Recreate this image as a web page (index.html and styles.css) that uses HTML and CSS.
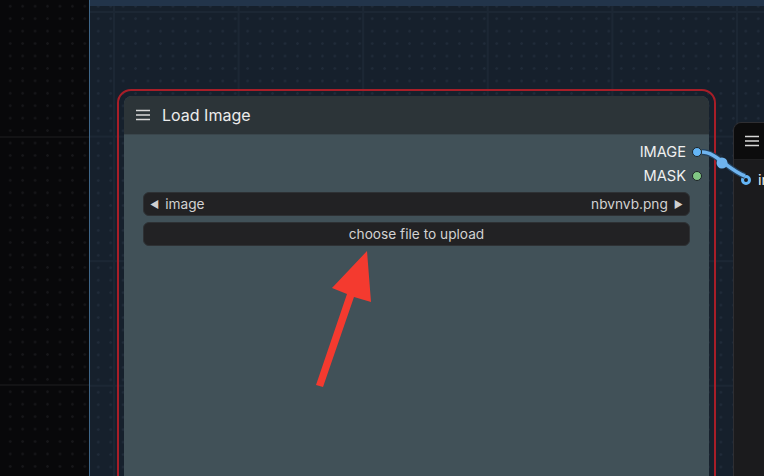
FILE: index.html
```html
<!DOCTYPE html>
<html>
<head>
<meta charset="utf-8">
<link rel="stylesheet" href="styles.css">
</head>
<body>
<div class="canvas">
  <div class="group">
    <div class="group-band"></div>
  </div>

  <div class="node selected">
    <div class="node-title">
      <svg class="menu-icon" width="14" height="12" viewBox="0 0 14 12"><path d="M0 1.5H14M0 6H14M0 10.5H14" stroke="#d8d8d8" stroke-width="1.4"/></svg>
      <span>Load Image</span>
    </div>
    <div class="node-body">
      <div class="slot-out"><span>IMAGE</span><i class="dot dot-image"></i></div>
      <div class="slot-out"><span>MASK</span><i class="dot dot-mask"></i></div>
      <div class="widget combo">
        <span class="arrow">&#9664;</span>
        <span class="label">image</span>
        <span class="value">nbvnvb.png</span>
        <span class="arrow">&#9654;</span>
      </div>
      <div class="widget button">choose file to upload</div>
    </div>
  </div>

  <div class="node other">
    <div class="node-title dark">
      <svg class="menu-icon" width="14" height="12" viewBox="0 0 14 12"><path d="M0 1.5H14M0 6H14M0 10.5H14" stroke="#d8d8d8" stroke-width="1.4"/></svg>
    </div>
    <div class="node-body dark">
      <div class="slot-in"><i class="dot ring"></i><span>image</span></div>
    </div>
  </div>

  <svg class="links" width="764" height="476" viewBox="0 0 764 476">
    <path d="M702 152 C716 152 728 170 745 176" stroke="#24425e" stroke-width="6" fill="none"/>
    <path d="M702 152 C716 152 728 170 745 176" stroke="#6fb4ef" stroke-width="3.6" fill="none"/>
    <circle cx="722" cy="163" r="5.5" fill="#6fb4ef"/>
  </svg>

  <svg class="pointer" width="764" height="476" viewBox="0 0 764 476">
    <polygon points="367,251 371,302 354,297 323,387 316,385 347,294 332,288" fill="#f43a2f"/>
  </svg>
</div>
</body>
</html>
```

FILE: styles.css
```css
* { box-sizing: border-box; }

html, body {
  margin: 0;
  width: 764px;
  height: 476px;
  overflow: hidden;
  background: #08080a;
  font-family: Inter, "Noto Sans", "Liberation Sans", sans-serif;
}

.canvas {
  position: relative;
  width: 764px;
  height: 476px;
  overflow: hidden;
  background-color: #08080a;
  background-image:
    linear-gradient(to bottom, transparent 136px, #131315 136px, #131315 138px, transparent 138px),
    linear-gradient(to bottom, transparent 384px, #131315 384px, #131315 386px, transparent 386px),
    radial-gradient(circle, #161619 1.1px, transparent 1.5px);
  background-size: 100% 100%, 100% 100%, 12.45px 12.45px;
  background-position: 0 0, 0 0, 4px 0px;
}

/* group frame behind the nodes */
.group {
  position: absolute;
  left: 89px;
  top: 0;
  right: 0;
  bottom: 0;
  border-left: 1px solid #3f6688;
  background-color: #16202c;
  background-image:
    linear-gradient(to right, #1c2734 2px, transparent 2px),
    linear-gradient(to bottom, #1c2734 2px, transparent 2px),
    radial-gradient(circle, #202b39 1.1px, transparent 1.5px);
  background-size: 124.6px 100%, 100% 124.6px, 12.46px 12.46px;
  background-position: 23px 0, 0 11px, 2px 0px;
}

.group-band {
  height: 6px;
  background: #22344a;
}

/* nodes */
.node {
  position: absolute;
  display: flex;
  flex-direction: column;
  border-radius: 8px;
}

.node.selected {
  left: 124px;
  top: 96px;
  width: 585px;
  height: 420px;
  background: #415158;
}

.node.selected::before {
  content: "";
  position: absolute;
  inset: -7px;
  border: 2px solid #a81e28;
  border-radius: 14px;
  pointer-events: none;
}

.node-title {
  height: 39px;
  display: flex;
  align-items: center;
  gap: 12px;
  padding-left: 12px;
  background: #2c3438;
  border-radius: 8px 8px 0 0;
  color: #ececec;
  font-size: 16px;
  border-bottom: 1px solid #3a464c;
}

.node-body {
  flex: 1;
  padding-top: 5px;
  display: flex;
  flex-direction: column;
}

.slot-out {
  height: 24px;
  display: flex;
  align-items: center;
  justify-content: flex-end;
  gap: 6px;
  padding-right: 7px;
  color: #f0f0f0;
  font-size: 14.6px;
}

.dot {
  display: block;
  width: 10px;
  height: 10px;
  border-radius: 50%;
  border: 1px solid #1c2326;
}

.dot-image { background: #64b5f6; }
.dot-mask { background: #81c784; }

.widget {
  height: 24px;
  margin: 0 19px;
  border-radius: 6px;
  background: #222224;
  border: 1px solid #2e3134;
  color: #d2d2d2;
  font-size: 13.7px;
  display: flex;
  align-items: center;
}

.combo {
  margin-top: 4px;
  padding: 0 6px;
  gap: 6px;
}

.combo .arrow {
  font-size: 10px;
  color: #d0d0d0;
}

.combo .label { flex: 1; }

.button {
  margin-top: 6px;
  justify-content: center;
}

/* neighbouring node on the right */
.node.other {
  left: 733px;
  top: 122px;
  width: 120px;
  height: 400px;
  background: #1b1b1d;
  border: 1px solid #2e2e32;
}

.node-title.dark {
  height: 37px;
  background: #0c0c0d;
  border-bottom: 1px solid #202022;
  padding-left: 11px;
}

.node-body.dark {
  padding-top: 8px;
}

.slot-in {
  height: 24px;
  display: flex;
  align-items: center;
  gap: 7px;
  padding-left: 7px;
  color: #f0f0f0;
  font-size: 14.6px;
}

.dot.ring {
  width: 10px;
  height: 10px;
  background: #1b1b1d;
  border: 3px solid #64b5f6;
}

.links, .pointer {
  position: absolute;
  left: 0;
  top: 0;
  pointer-events: none;
}
```
